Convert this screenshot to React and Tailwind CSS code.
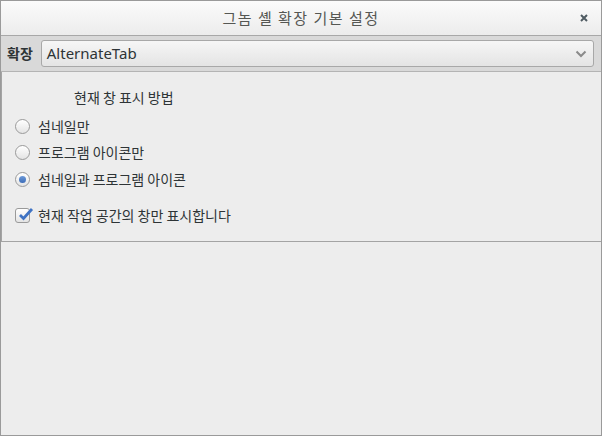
import React from "react";

function Radio({ checked, label }) {
  return (
    <div className="flex items-center h-[26.5px]">
      <span className="w-[15px] h-[15px] rounded-full border border-[#9a9a9a] bg-gradient-to-b from-[#ffffff] to-[#e4e4e4] flex items-center justify-center ml-[13px] shadow-[inset_0_1px_0_#fff]">
        {checked && <span className="w-[7px] h-[7px] rounded-full bg-gradient-to-b from-[#6d9ad8] to-[#3c6cb8]" />}
      </span>
      <span className="ml-[8px] text-[14px] text-[#2e3436]">{label}</span>
    </div>
  );
}

export default function App() {
  return (
    <div className="w-[602px] h-[436px] bg-[#ededed] border border-[#9a9a9a] flex flex-col font-['Noto_Sans_CJK_KR','Noto_Sans',sans-serif] overflow-hidden">
      <div className="h-[35px] shrink-0 bg-gradient-to-b from-[#fbfbfb] to-[#ececec] border-b border-[#a8a8a8] flex items-center relative">
        <div className="flex-1 text-center text-[15px] tracking-[1.5px] text-[#555753]">그놈 셸 확장 기본 설정</div>
        <span className="absolute right-[12px] top-[12px] w-[10px] h-[10px] flex items-center justify-center">
          <svg width="8" height="8" viewBox="0 0 8 8">
            <path d="M1 1 L7 7 M7 1 L1 7" stroke="#4f5b62" strokeWidth="2" />
          </svg>
        </span>
      </div>
      <div className="h-[36px] shrink-0 bg-[#d9d9d9] flex items-center pl-[6px] pr-[7px] border-b border-[#b4b4b4]">
        <span className="text-[14px] font-bold text-[#2e3436] mr-[8px]">확장</span>
        <div className="flex-1 h-[27px] rounded-[3px] border border-[#a8a8a8] bg-gradient-to-b from-[#f6f6f6] to-[#e4e4e4] flex items-center pl-[5px] pr-[6px]">
          <span className="flex-1 text-[15px] text-[#2e3436] font-['Noto_Sans',sans-serif]">AlternateTab</span>
          <svg width="12" height="8" viewBox="0 0 12 8">
            <path d="M1.5 1.5 L6 6 L10.5 1.5" fill="none" stroke="#8a8a8a" strokeWidth="2" />
          </svg>
        </div>
      </div>
      <div className="h-[170px] shrink-0 border-l border-b border-[#a4a4a4] bg-[#ededed] flex flex-col">
        <div className="pl-[72px] pt-[15px] text-[14px] text-[#2e3436] h-[41px]">현재 창 표시 방법</div>
        <Radio label="섬네일만" />
        <Radio label="프로그램 아이콘만" />
        <Radio checked label="섬네일과 프로그램 아이콘" />
        <div className="flex items-center h-[26px] mt-[10px]">
          <span className="w-[15px] h-[15px] rounded-[3px] border border-[#9a9a9a] bg-gradient-to-b from-[#ffffff] to-[#e4e4e4] ml-[13px] relative">
            <svg className="absolute left-[1px] top-[-3px]" width="17" height="17" viewBox="0 0 17 17">
              <path d="M3 9 L6.5 12.5 L15 3" fill="none" stroke="#3f73c4" strokeWidth="2.8" />
            </svg>
          </span>
          <span className="ml-[8px] text-[14px] text-[#2e3436]">현재 작업 공간의 창만 표시합니다</span>
        </div>
      </div>
    </div>
  );
}
